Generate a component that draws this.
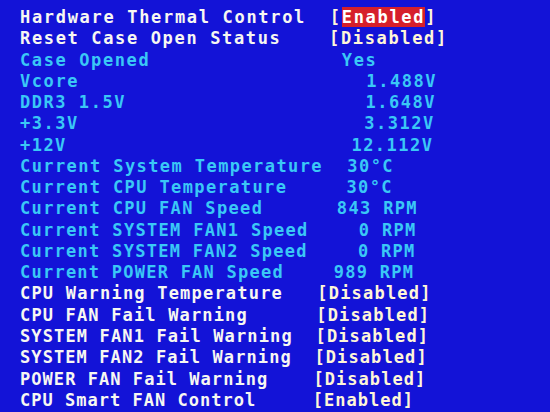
type Row = {
  label: string;
  value: string;
  col: number;
  kind: "setting" | "info";
  track: string;
  shift?: string;
  selected?: boolean;
};

// the photo is slightly keystoned: each row gets its own letter spacing
const rows: Row[] = [
  { label: "Hardware Thermal Control", value: "Enabled", col: 26, kind: "setting", track: "tracking-[1.68px]", selected: true },
  { label: "Reset Case Open Status", value: "Disabled", col: 26, kind: "setting", track: "tracking-[1.65px]" },
  { label: "Case Opened", value: "Yes", col: 27, kind: "info", track: "tracking-[1.61px]", shift: "ml-[2px]" },
  { label: "Vcore", value: "1.488V", col: 29, kind: "info", track: "tracking-[1.57px]", shift: "ml-[4px]" },
  { label: "DDR3 1.5V", value: "1.648V", col: 29, kind: "info", track: "tracking-[1.54px]", shift: "ml-[4px]" },
  { label: "+3.3V", value: "3.312V", col: 29, kind: "info", track: "tracking-[1.50px]", shift: "ml-[4px]" },
  { label: "+12V", value: "12.112V", col: 28, kind: "info", track: "tracking-[1.46px]", shift: "ml-[4px]" },
  { label: "Current System Temperature", value: "30°C", col: 28, kind: "info", track: "tracking-[1.42px]", shift: "ml-[1px]" },
  { label: "Current CPU Temperature", value: "30°C", col: 28, kind: "info", track: "tracking-[1.39px]", shift: "ml-[1px]" },
  { label: "Current CPU FAN Speed", value: "843 RPM", col: 27, kind: "info", track: "tracking-[1.35px]", shift: "ml-[4px]" },
  { label: "Current SYSTEM FAN1 Speed", value: "0 RPM", col: 29, kind: "info", track: "tracking-[1.31px]", shift: "ml-[4px]" },
  { label: "Current SYSTEM FAN2 Speed", value: "0 RPM", col: 29, kind: "info", track: "tracking-[1.28px]", shift: "ml-[4px]" },
  { label: "Current POWER FAN Speed", value: "989 RPM", col: 27, kind: "info", track: "tracking-[1.24px]", shift: "ml-[4px]" },
  { label: "CPU Warning Temperature", value: "Disabled", col: 26, kind: "setting", track: "tracking-[1.20px]" },
  { label: "CPU FAN Fail Warning", value: "Disabled", col: 26, kind: "setting", track: "tracking-[1.16px]" },
  { label: "SYSTEM FAN1 Fail Warning", value: "Disabled", col: 26, kind: "setting", track: "tracking-[1.13px]" },
  { label: "SYSTEM FAN2 Fail Warning", value: "Disabled", col: 26, kind: "setting", track: "tracking-[1.09px]" },
  { label: "POWER FAN Fail Warning", value: "Disabled", col: 26, kind: "setting", track: "tracking-[1.05px]" },
  { label: "CPU Smart FAN Control", value: "Enabled", col: 26, kind: "setting", track: "tracking-[1.02px]" },
];

function BiosRow({ row }: { row: Row }) {
  const pad = row.label.padEnd(row.col, " ");

  if (row.kind === "info") {
    return (
      <div className={`whitespace-pre text-[#3ac8f6] ${row.track}`}>
        {pad}
        <span className={row.shift}>{row.value}</span>
      </div>
    );
  }

  return (
    <div className={`whitespace-pre ${row.track}`}>
      <span className="text-[#f7f7f2]">{pad}</span>
      <span className="text-[#fff6d8]">[</span>
      {row.selected ? (
        <span className="bg-[#d61f2b] text-white">{row.value}</span>
      ) : (
        <span className="text-[#fff6d8]">{row.value}</span>
      )}
      <span className="text-[#fff6d8]">]</span>
    </div>
  );
}

export default function App() {
  return (
    <main className="w-[550px] h-[412px] overflow-hidden bg-[#1313d7]">
      <section className="pl-[20px] pt-[7px] font-['DejaVu_Sans_Mono',monospace] text-[17px] font-bold leading-[21.27px]">
        {rows.map((row) => (
          <BiosRow key={row.label} row={row} />
        ))}
      </section>
    </main>
  );
}
